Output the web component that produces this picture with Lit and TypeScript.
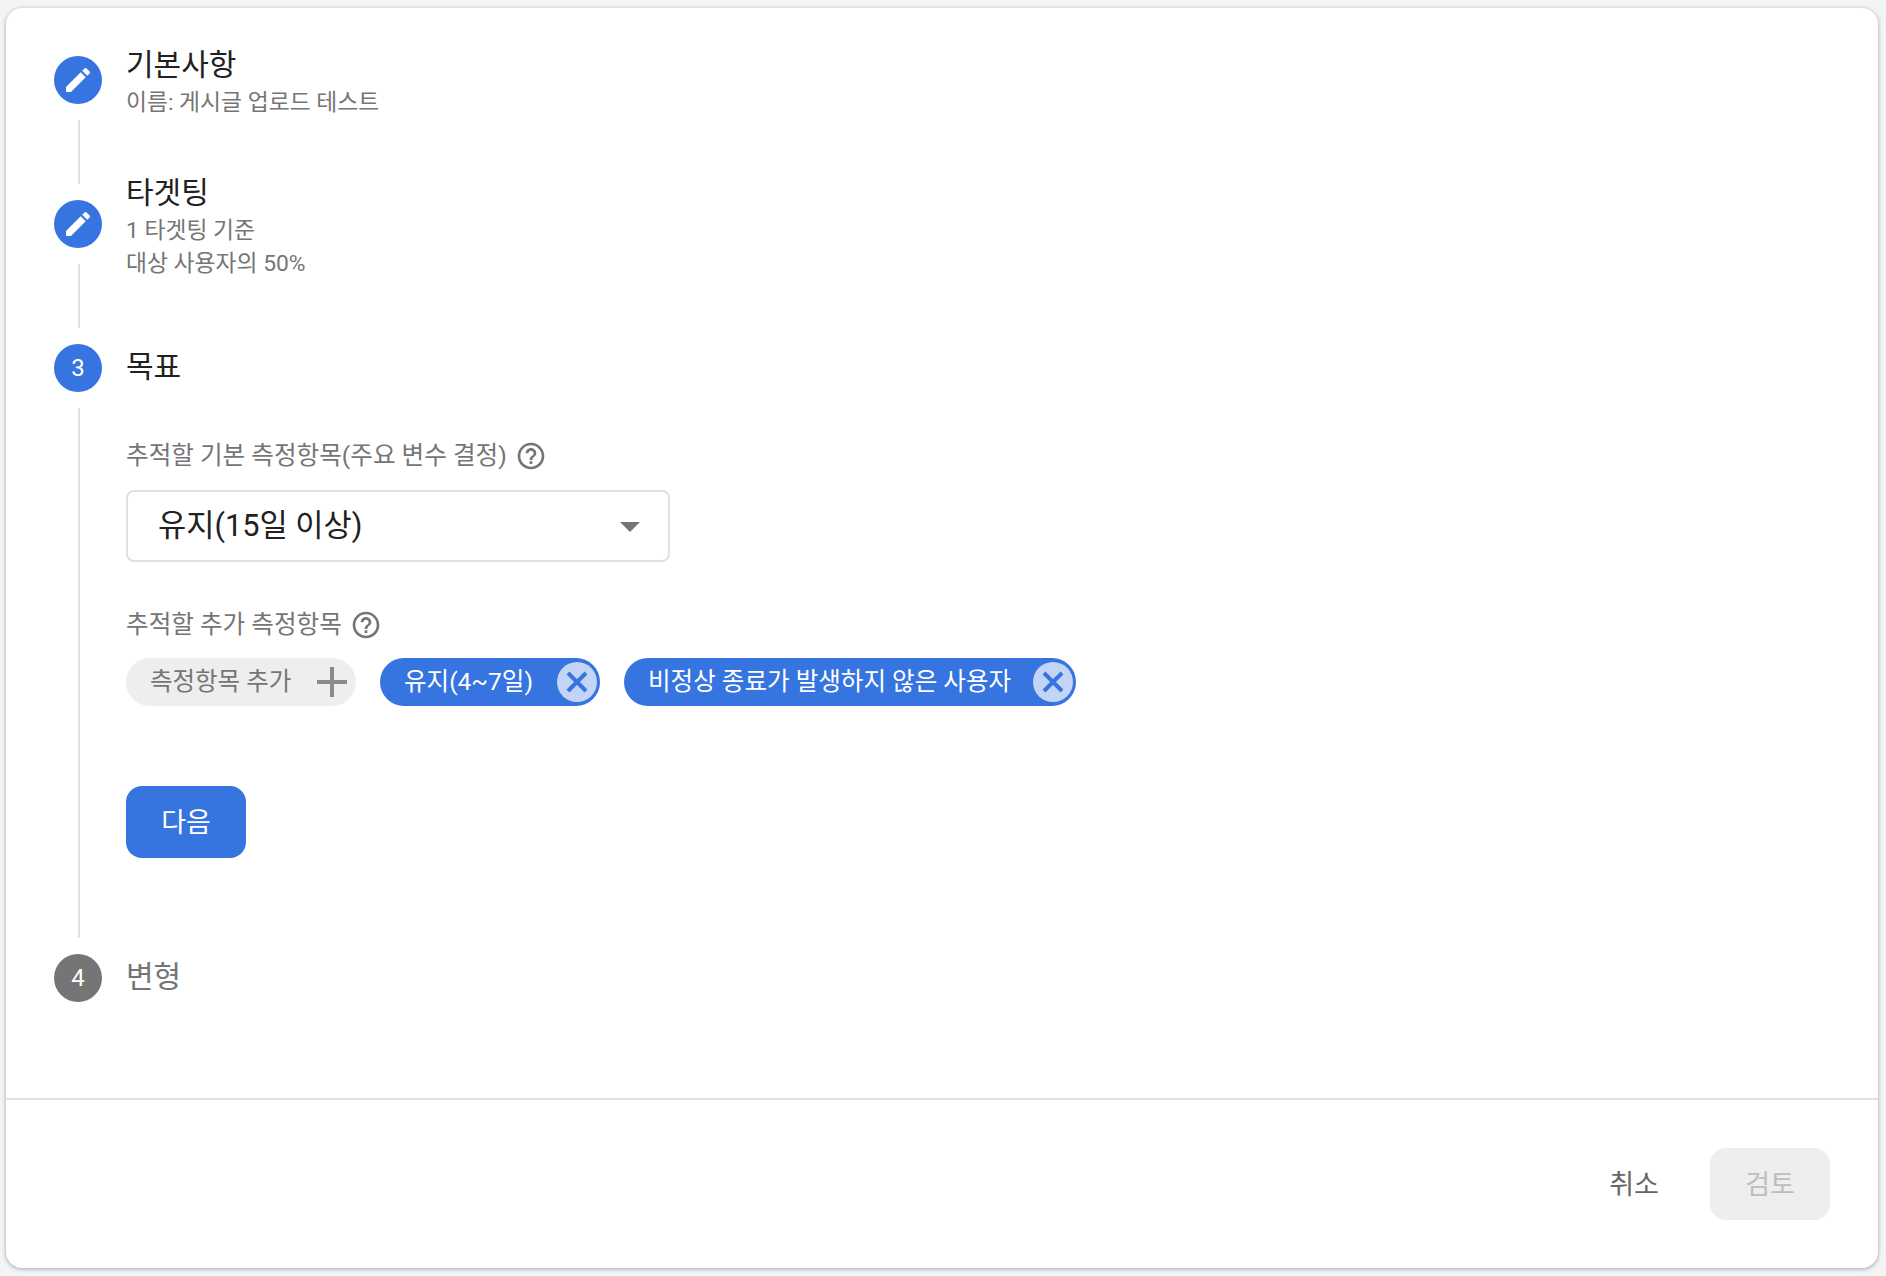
import { LitElement, css, html, svg } from "lit";
import { customElement } from "lit/decorators.js";

const editIcon = svg`<path d="M3 17.25V21h3.75L17.81 9.94l-3.75-3.75L3 17.25zM20.71 7.04c.39-.39.39-1.02 0-1.41l-2.34-2.34c-.39-.39-1.02-.39-1.41 0l-1.83 1.83 3.75 3.75 1.83-1.83z" />`;
const helpIcon = svg`<path d="M11 18h2v-2h-2v2zm1-16C6.48 2 2 6.48 2 12s4.48 10 10 10 10-4.48 10-10S17.52 2 12 2zm0 18c-4.41 0-8-3.59-8-8s3.59-8 8-8 8 3.59 8 8-3.59 8-8 8zm0-14c-2.21 0-4 1.79-4 4h2c0-1.1.9-2 2-2s2 .9 2 2c0 2-3 1.75-3 5h2c0-2.25 3-2.5 3-5 0-2.21-1.79-4-4-4z" />`;

@customElement("app-root")
export class AppRoot extends LitElement {
  static styles = css`
    :host {
      display: block;
      height: 1276px;
      box-sizing: border-box;
      padding: 8px 8px 8px 6px;
      background: #f3f4f6;
      font-family: Roboto, "Noto Sans CJK KR", sans-serif;
      color: #212121;
    }

    .card {
      height: 100%;
      display: flex;
      flex-direction: column;
      background: #fff;
      border-radius: 16px;
      box-shadow: 0 1px 4px rgba(60, 64, 67, 0.45);
    }

    .steps {
      flex: 1;
      padding: 48px 48px 0;
    }

    .step {
      display: grid;
      grid-template-columns: 48px 1fr;
      column-gap: 24px;
    }

    .circle {
      width: 48px;
      height: 48px;
      border-radius: 50%;
      background: #3674e0;
      color: #fff;
      display: flex;
      align-items: center;
      justify-content: center;
      font-size: 24px;
    }

    .circle svg {
      width: 32px;
      height: 32px;
      fill: #fff;
    }

    .circle.off {
      background: #757575;
    }

    .head {
      height: 48px;
      box-sizing: border-box;
      display: flex;
      flex-direction: column;
      justify-content: center;
    }

    .head.has-sub {
      padding-top: 6px;
    }

    .title {
      font-size: 30px;
      line-height: 36px;
      padding-bottom: 3px;
      flex: none;
    }

    .off-title {
      color: #757575;
    }

    .sub {
      font-size: 22.8px;
      line-height: 33px;
      color: #757575;
      flex: none;
    }

    .line {
      width: 2px;
      margin: 16px 0 16px 24px;
      justify-self: start;
      background: #e0e0e0;
    }

    .gap {
      height: 96px;
    }

    .content {
      padding: 45px 0 96px;
    }

    .label {
      display: flex;
      align-items: center;
      gap: 8px;
      height: 36px;
      font-size: 24.6px;
      color: #757575;
    }

    .label span {
      padding-bottom: 4px;
    }

    .chip span {
      padding-bottom: 6px;
    }

    .select span {
      padding-bottom: 8px;
    }

    .label svg {
      width: 32px;
      height: 32px;
      margin-top: 2px;
      fill: #757575;
    }

    .select {
      width: 544px;
      height: 72px;
      box-sizing: border-box;
      margin: 17px 0 44px;
      padding: 0 28px 0 30px;
      display: flex;
      align-items: center;
      justify-content: space-between;
      border: 2px solid #e0e0e0;
      border-radius: 8px;
      font-size: 30.7px;
    }

    .arrow {
      width: 0;
      height: 0;
      margin-top: 1px;
      border: solid transparent;
      border-width: 10px 10px 0;
      border-top-color: #757575;
    }

    .chips {
      display: flex;
      gap: 24px;
      margin-top: 16px;
    }

    .chip {
      height: 48px;
      border-radius: 24px;
      box-sizing: border-box;
      display: flex;
      align-items: center;
      justify-content: space-between;
      padding: 0 3px 0 24px;
      font-size: 24.5px;
    }

    .chip.add {
      width: 230px;
      padding-right: 9px;
      background: #eee;
      color: #757575;
    }

    .chip.on {
      min-width: 220px;
      background: #3674e0;
      color: #fff;
      font-size: 24.55px;
    }

    .chip.on span {
      margin-right: 22px;
    }

    .plus {
      width: 30px;
      height: 30px;
      fill: #8a8a8a;
    }

    .remove {
      width: 40px;
      height: 40px;
      border-radius: 50%;
      background: #c3d4f6;
      display: flex;
      align-items: center;
      justify-content: center;
    }

    .remove svg {
      width: 24px;
      height: 24px;
      stroke: #3674e0;
      stroke-width: 4;
    }

    .btn {
      width: 120px;
      height: 72px;
      border: 0;
      border-radius: 16px;
      padding: 0 0 4px;
      font: inherit;
      font-size: 27px;
    }

    .next {
      display: block;
      margin-top: 80px;
      background: #3674e0;
      color: #fff;
    }

    .footer {
      height: 170px;
      box-sizing: border-box;
      border-top: 2px solid #e0e0e0;
      padding: 48px 48px 0 0;
      display: flex;
      justify-content: flex-end;
      align-items: flex-start;
      gap: 16px;
    }

    .cancel {
      background: none;
      color: #666;
    }

    .review {
      background: #eee;
      color: #bdbdbd;
    }
  `;

  private _help() {
    return html`<svg viewBox="0 0 24 24">${helpIcon}</svg>`;
  }

  private _head(title: string, subs: string[] = [], muted = false) {
    return html`<div class="head ${subs.length ? "has-sub" : ""}">
      <div class="title ${muted ? "off-title" : ""}">${title}</div>
      ${subs.map(s => html`<div class="sub">${s}</div>`)}
    </div>`;
  }

  private _chip(text: string) {
    return html`<div class="chip on">
      <span>${text}</span>
      <div class="remove">
        <svg viewBox="0 0 24 24"><path d="M3 3 21 21M21 3 3 21" /></svg>
      </div>
    </div>`;
  }

  render() {
    return html`<div class="card">
      <div class="steps">
        <div class="step">
          <div class="circle"><svg viewBox="0 0 24 24">${editIcon}</svg></div>
          ${this._head("기본사항", ["이름: 게시글 업로드 테스트"])}
          <div class="line"></div>
          <div class="gap"></div>
        </div>
        <div class="step">
          <div class="circle"><svg viewBox="0 0 24 24">${editIcon}</svg></div>
          ${this._head("타겟팅", ["1 타겟팅 기준", "대상 사용자의 50%"])}
          <div class="line"></div>
          <div class="gap"></div>
        </div>
        <div class="step">
          <div class="circle">3</div>
          ${this._head("목표")}
          <div class="line"></div>
          <div class="content">
            <div class="label">
              <span>추적할 기본 측정항목(주요 변수 결정)</span>
              ${this._help()}
            </div>
            <div class="select">
              <span>유지(15일 이상)</span>
              <div class="arrow"></div>
            </div>
            <div class="label">
              <span>추적할 추가 측정항목</span>
              ${this._help()}
            </div>
            <div class="chips">
              <div class="chip add">
                <span>측정항목 추가</span>
                <svg class="plus" viewBox="0 0 30 30"><path d="M13 0h4v13h13v4H17v13h-4V17H0v-4h13z" /></svg>
              </div>
              ${this._chip("유지(4~7일)")}
              ${this._chip("비정상 종료가 발생하지 않은 사용자")}
            </div>
            <button class="btn next">다음</button>
          </div>
        </div>
        <div class="step">
          <div class="circle off">4</div>
          ${this._head("변형", [], true)}
        </div>
      </div>
      <div class="footer">
        <button class="btn cancel">취소</button>
        <button class="btn review">검토</button>
      </div>
    </div>`;
  }
}
